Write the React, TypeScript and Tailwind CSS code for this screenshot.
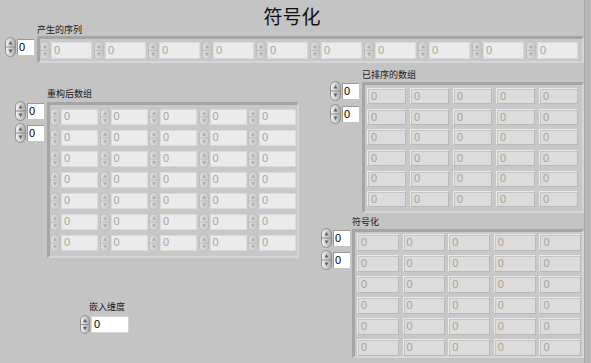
import React from "react";

function Spinner({ w = 11, h = 20, faint = false }: { w?: number; h?: number; faint?: boolean }) {
  const id = faint ? "gf" : "ga";
  return (
    <svg width={w} height={h} viewBox={`0 0 ${w} ${h}`} className="block shrink-0">
      <defs>
        <linearGradient id={id} x1="0" y1="0" x2="1" y2="0">
          <stop offset="0" stopColor={faint ? "#dedede" : "#f6f6f6"} />
          <stop offset="1" stopColor={faint ? "#c9c9c9" : "#a9a9a9"} />
        </linearGradient>
      </defs>
      <rect x="0.5" y="0.5" width={w - 1} height={h - 1} rx={(w - 1) / 2} fill={`url(#${id})`} stroke={faint ? "#bcbcbc" : "#8e8e8e"} />
      <line x1="1" y1={h / 2} x2={w - 1} y2={h / 2} stroke={faint ? "#bcbcbc" : "#8a8a8a"} />
      <polygon points={`${w / 2},${h * 0.2} ${w / 2 - 2},${h * 0.38} ${w / 2 + 2},${h * 0.38}`} fill={faint ? "#adadad" : "#606060"} />
      <polygon points={`${w / 2},${h * 0.8} ${w / 2 - 2},${h * 0.62} ${w / 2 + 2},${h * 0.62}`} fill={faint ? "#adadad" : "#606060"} />
    </svg>
  );
}

function IndexBox() {
  return (
    <div className="flex items-center">
      <Spinner w={11} h={20} />
      <div className="ml-[1px] w-[17px] h-[16px] bg-white border-t border-l border-t-[#9a9a9a] border-l-[#9a9a9a] text-[11px] leading-[15px] pl-[1px] text-black font-['Liberation_Sans',sans-serif]">
        0
      </div>
    </div>
  );
}

function CtrlCell({ boxW, boxH }: { boxW: number; boxH: number }) {
  return (
    <div className="flex items-center">
      <Spinner w={10} h={boxH + 2} faint />
      <div
        className="ml-[1px] bg-[#ebebeb] border border-[#dadada] text-[11px] pl-[2px] text-[#a4a4a4] font-['Liberation_Sans',sans-serif] flex items-center"
        style={{ width: boxW, height: boxH }}
      >
        0
      </div>
    </div>
  );
}

function IndCell({ boxW, boxH }: { boxW: number; boxH: number }) {
  return (
    <div
      className="bg-[#dcdcdc] border border-t-[#eaeaea] border-l-[#eaeaea] border-r-[#b9b9b9] border-b-[#b9b9b9] shadow-[inset_1px_1px_0_#c4c4c4] text-[11px] pl-[3px] text-[#aaa193] font-['Liberation_Sans',sans-serif] flex items-center"
      style={{ width: boxW, height: boxH }}
    >
      0
    </div>
  );
}

const frame =
  "absolute border-t-[3px] border-l-[3px] border-r-2 border-b-2 border-t-[#a5a5a5] border-l-[#a5a5a5] border-r-[#d6d6d6] border-b-[#d6d6d6] bg-[#c8c8c8]";

const label = "absolute text-[9px] leading-[10px] text-[#1a1a1a] font-['Noto_Sans_CJK_SC',sans-serif] whitespace-nowrap";

export default function App() {
  return (
    <div className="relative w-[591px] h-[363px] bg-[#c4c4c4] overflow-hidden font-['Noto_Sans_CJK_SC',sans-serif]">
      {/* title */}
      <div className="absolute left-0 top-[4px] w-[584px] text-center text-[19px] leading-[24px] text-[#111]">
        符号化
      </div>

      {/* 产生的序列 */}
      <div className={`${label} left-[37px] top-[25px]`}>产生的序列</div>
      <div className="absolute left-[5px] top-[37px]">
        <IndexBox />
      </div>
      <div className={`${frame} left-[37px] top-[36px] w-[547px] h-[27px]`}>
        <div className="flex h-full items-center">
          {Array.from({ length: 10 }).map((_, i) => (
            <div key={i} className="w-[54px] shrink-0">
              <CtrlCell boxW={41} boxH={17} />
            </div>
          ))}
        </div>
      </div>

      {/* 重构后数组 */}
      <div className={`${label} left-[47px] top-[89px]`}>重构后数组</div>
      <div className="absolute left-[15px] top-[101px] flex flex-col gap-[2px]">
        <IndexBox />
        <IndexBox />
      </div>
      <div className={`${frame} left-[47px] top-[102px] w-[252px] h-[156px]`}>
        <div className="grid grid-cols-[repeat(5,49.5px)] grid-rows-[repeat(7,21px)] pt-[1px]">
          {Array.from({ length: 35 }).map((_, i) => (
            <div key={i} className="flex items-center">
              <CtrlCell boxW={37} boxH={16} />
            </div>
          ))}
        </div>
      </div>

      {/* 已排序的数组 */}
      <div className={`${label} left-[362px] top-[70px]`}>已排序的数组</div>
      <div className="absolute left-[330px] top-[81px] flex flex-col gap-[3px]">
        <IndexBox />
        <IndexBox />
      </div>
      <div className={`${frame} left-[362px] top-[82px] w-[222px] h-[131px]`}>
        <div className="grid grid-cols-[repeat(5,43px)] grid-rows-[repeat(6,20.6px)] pl-[2px] pt-[1px]">
          {Array.from({ length: 30 }).map((_, i) => (
            <div key={i} className="flex items-center">
              <IndCell boxW={39} boxH={16} />
            </div>
          ))}
        </div>
      </div>

      {/* 符号化 */}
      <div className={`${label} left-[352px] top-[217px]`}>符号化</div>
      <div className="absolute left-[321px] top-[228px] flex flex-col gap-[2px]">
        <IndexBox />
        <IndexBox />
      </div>
      <div className={`${frame} left-[352px] top-[229px] w-[232px] h-[129px]`}>
        <div className="grid grid-cols-[repeat(5,45.6px)] grid-rows-[repeat(6,21px)] pl-[2px] pt-[0px]">
          {Array.from({ length: 30 }).map((_, i) => (
            <div key={i} className="flex items-center">
              <IndCell boxW={42} boxH={17} />
            </div>
          ))}
        </div>
      </div>

      {/* 嵌入维度 */}
      <div className={`${label} left-[89px] top-[302px]`}>嵌入维度</div>
      <div className="absolute left-[80px] top-[315px] flex items-center">
        <Spinner w={10} h={19} />
        <div className="ml-[1px] w-[38px] h-[17px] bg-white border border-[#d4d4d4] text-[11px] leading-[15px] pl-[2px] text-black font-['Liberation_Sans',sans-serif]">
          0
        </div>
      </div>

      {/* right edge strip */}
      <div className="absolute right-0 top-0 w-[7px] h-full bg-[#b7b7b7] border-l border-[#a9a9a9]" />
    </div>
  );
}
